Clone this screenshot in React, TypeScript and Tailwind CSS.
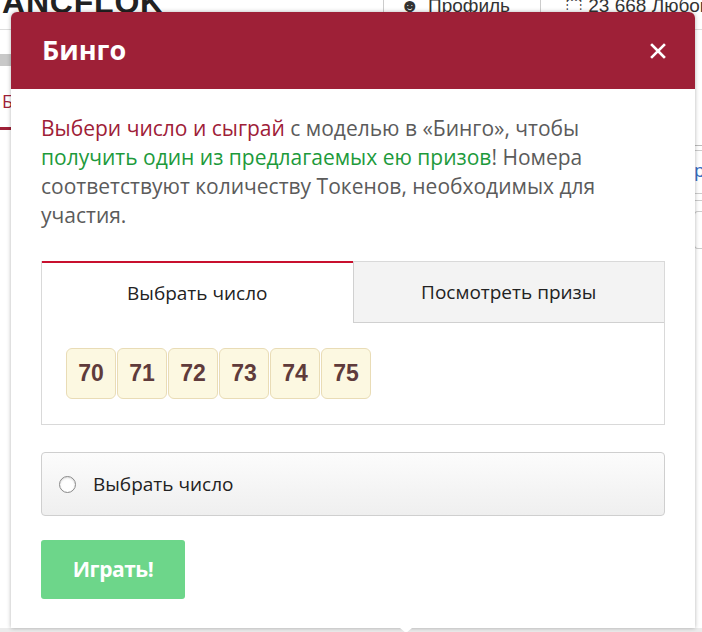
import React from "react";

const sans = "font-['Open_Sans',_'Noto_Sans',_sans-serif]";

const numbers = [70, 71, 72, 73, 74, 75];

// Bits of the page that peek out around the dialog
const PageBehind = () => (
  <div className="absolute inset-0 bg-white">
    <div className="flex h-[30px] items-start border-b border-[#ddd]">
      <div className="-mt-[22px] pl-[2px] text-[32px] font-bold tracking-wide text-[#222] font-['Liberation_Sans',_sans-serif]">
        ANCFLOK
      </div>
      <div className="ml-auto flex h-full">
        <div className="-mt-[8px] flex w-[157px] items-start gap-2 border-l border-[#ccc] pl-[16px] text-[19px] text-[#333] font-['Liberation_Sans',_sans-serif]">
          <span>&#9787;</span> Профиль
        </div>
        <div className="-mt-[8px] w-[162px] whitespace-nowrap border-l border-[#ccc] pl-[24px] text-[19px] text-[#333] font-['Liberation_Sans',_sans-serif]">
          ⬚ 23 668 Любовь
        </div>
      </div>
    </div>
    <div className="mt-[24px] h-[12px] w-[12px] bg-[#c8c8c8]" />
    <div className={`mt-[22px] pl-[2px] text-[18px] text-[#9e2037] ${sans}`}>Б</div>
    <div className="mt-[12px] h-[3px] w-[12px] bg-[#9e2037]" />
    <div className="absolute right-0 top-[145px] flex w-[8px] flex-col">
      <div className="h-px bg-[#bbb]" />
      <div className="mt-[4px] h-px bg-[#ccc]" />
      <div className="mt-[10px] text-[18px] leading-none text-[#3a6fc4]">р</div>
      <div className="mt-[14px] h-[8px] border-y border-[#ccc]" />
      <div className="mt-[10px] h-[38px] rounded-l border border-r-0 border-[#ccc]" />
    </div>
    <div className="absolute bottom-0 left-0 h-[4px] w-full bg-[#ebebeb]" />
  </div>
);

export default function App() {
  return (
    <div className="relative h-[632px] w-[702px] overflow-hidden bg-white">
      <PageBehind />

      <div className="absolute left-[11px] top-[12px] flex h-[616px] w-[684px] flex-col rounded-t-[6px] bg-white shadow-[0_0_4px_rgba(0,0,0,0.3)]">
        <div className="flex h-[77px] items-center justify-between rounded-t-[6px] bg-[#9e2037] pl-[31px] pr-[29px]">
          <h2 className={`text-[27px] font-bold text-white ${sans}`}>Бинго</h2>
          <svg width="16" height="16" viewBox="0 0 16 16" className="mt-[1px]">
            <path d="M2 2L14 14M14 2L2 14" stroke="#fff" strokeWidth="2.6" strokeLinecap="square" />
          </svg>
        </div>

        <div className={`flex flex-1 flex-col px-[30px] pt-[25px] ${sans}`}>
          <p className="text-[21px] leading-[29px] text-[#5b5b5b]">
            <span className="text-[#9e2037]">Выбери число и сыграй</span> с моделью в «Бинго», чтобы{" "}
            <span className="text-[#1d9a3b]">получить один из предлагаемых ею призов</span>! Номера соответствуют
            количеству Токенов, необходимых для участия.
          </p>

          <div className="mt-[31px] border border-[#d9d9d9]">
            <div className="flex h-[61px]">
              <div className="-mt-px flex flex-1 items-center justify-center border-t-2 border-[#c8102e] bg-white text-[19px] text-[#222]">
                Выбрать число
              </div>
              <div className="flex flex-1 items-center justify-center border-b border-l border-[#d0d0d0] bg-[#f3f3f3] text-[19px] text-[#222]">
                Посмотреть призы
              </div>
            </div>
            <div className="flex gap-[1px] px-[24px] pb-[25px] pt-[25px]">
              {numbers.map((n) => (
                <div
                  key={n}
                  className="flex h-[51px] w-[50px] items-center justify-center rounded-[6px] border border-[#e9dcb6] bg-[#fcf8e1] text-[23px] font-bold text-[#5f3b3b] font-['Liberation_Sans',_Arial,_sans-serif]"
                >
                  {n}
                </div>
              ))}
            </div>
          </div>

          <label className="mt-[27px] flex h-[64px] items-center gap-[17px] rounded-[4px] border border-[#cfcfcf] bg-gradient-to-b from-[#fcfcfc] to-[#efefef] pl-[17px]">
            <span className="h-[17px] w-[17px] rounded-full border border-[#888] bg-white shadow-[inset_0_1px_2px_rgba(0,0,0,0.15)]" />
            <span className="text-[19px] text-[#222]">Выбрать число</span>
          </label>

          <button className="mt-[24px] h-[59px] w-[144px] rounded-[3px] bg-[#6dd68a] text-[21px] font-bold tracking-[-0.5px] text-white">
            Играть!
          </button>
        </div>

        <div className="absolute -bottom-[5px] left-[389px] h-0 w-0 border-x-[6px] border-t-[5px] border-x-transparent border-t-white" />
      </div>
    </div>
  );
}
